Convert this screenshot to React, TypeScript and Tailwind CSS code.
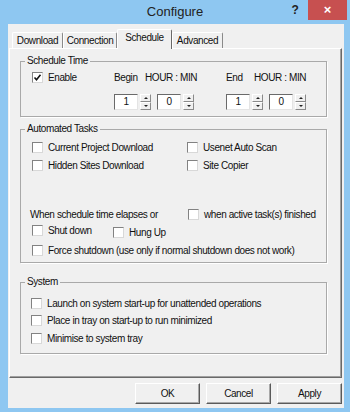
import React from "react";

const Box = ({ checked }: { checked?: boolean }) => (
  <span className="w-[11px] h-[11px] shrink-0 bg-white border border-t-[#828282] border-l-[#828282] border-r-[#d8d8d8] border-b-[#d8d8d8] flex items-center justify-center">
    {checked && (
      <svg width="9" height="9" viewBox="0 0 9 9">
        <path d="M1.5 4.5 L3.5 6.8 L7.5 1.8" stroke="#111" strokeWidth="1.6" fill="none" />
      </svg>
    )}
  </span>
);

const Check = ({ label, checked, className = "" }: { label: string; checked?: boolean; className?: string }) => (
  <label className={`flex items-center gap-[5px] h-[11px] whitespace-nowrap ${className}`}>
    <Box checked={checked} />
    <span>{label}</span>
  </label>
);

const Arrow = ({ up }: { up?: boolean }) => (
  <span
    className={
      up
        ? "w-0 h-0 border-x-[2px] border-x-transparent border-b-[2px] border-b-[#222]"
        : "w-0 h-0 border-x-[2px] border-x-transparent border-t-[2px] border-t-[#222]"
    }
  />
);

const Spin = ({ value }: { value: string }) => (
  <div className="flex items-center gap-[2px]">
    <div className="w-[24px] h-[16px] bg-white border border-t-[#6a6a6a] border-l-[#6a6a6a] border-r-[#e4e4e4] border-b-[#e4e4e4] flex items-center justify-center">
      {value}
    </div>
    <div className="flex flex-col w-[11px] h-[16px]">
      <div className="h-[8px] bg-[#f0f0f0] border border-t-white border-l-white border-r-[#8a8a8a] border-b-[#8a8a8a] flex items-center justify-center">
        <Arrow up />
      </div>
      <div className="h-[8px] bg-[#f0f0f0] border border-t-white border-l-white border-r-[#8a8a8a] border-b-[#8a8a8a] flex items-center justify-center">
        <Arrow />
      </div>
    </div>
  </div>
);

const TimePair = () => (
  <div className="flex items-center gap-[6px]">
    <Spin value="1" />
    <Spin value="0" />
  </div>
);

const Group = ({ title, className = "", children }: { title: string; className?: string; children: React.ReactNode }) => (
  <fieldset className={`ml-[10px] w-[307px] border border-[#a9a9a9] shadow-[1px_1px_0_#fff] ${className}`}>
    <legend className="ml-[4px] px-[2px] leading-[12px]">{title}</legend>
    {children}
  </fieldset>
);

const Tab = ({ label, active, w }: { label: string; active?: boolean; w: string }) =>
  active ? (
    <div className={`${w} h-[20px] mb-[-1px] relative z-10 bg-[#f0f0f0] rounded-t-[2px] border-t border-l border-r border-t-white border-l-white border-r-[#696969] flex justify-center pt-[2px]`}>
      {label}
    </div>
  ) : (
    <div className={`${w} h-[16px] rounded-t-[2px] border-t border-l border-r border-t-white border-l-white border-r-[#8a8a8a] flex items-center justify-center`}>
      {label}
    </div>
  );

const Btn = ({ label }: { label: string }) => (
  <button className="w-[65px] h-[21px] bg-[#f0f0f0] border border-t-white border-l-white border-r-[#5a5a5a] border-b-[#5a5a5a] shadow-[inset_-1px_-1px_0_#a8a8a8] flex items-center justify-center">
    {label}
  </button>
);

export default function App() {
  return (
    <div className="w-[350px] h-[412px] bg-[#8ec7f1] font-['Liberation_Sans',Arial,sans-serif] text-[10px] leading-[12px] tracking-[-0.4px] text-[#111] overflow-hidden">
      <div className="h-[24px] grid grid-cols-[1fr_auto_1fr]">
        <div />
        <div className="flex items-center text-[13px] tracking-normal text-[#222]">Configure</div>
        <div className="flex items-start justify-end pr-[3px]">
          <span className="w-[14px] h-[20px] mr-[6px] flex items-center justify-center font-bold text-[12px] text-[#222]">?</span>
          <span className="w-[39px] h-[20px] bg-[#c75050] flex items-center justify-center text-white font-bold text-[13px] tracking-normal">
            ×
          </span>
        </div>
      </div>

      <div className="ml-[8px] w-[336px] h-[384px] bg-[#f0f0f0] flex flex-col">
        <div className="h-[24px] flex items-end pl-[4px]">
          <Tab label="Download" w="w-[51px]" />
          <Tab label="Connection" w="w-[54px]" />
          <Tab label="Schedule" w="w-[55px]" active />
          <Tab label="Advanced" w="w-[51px]" />
        </div>

        <div className="ml-[1px] w-[333px] h-[330px] border border-t-white border-l-white border-r-[#696969] border-b-[#696969] shadow-[inset_-1px_-1px_0_#a0a0a0]">
          <Group title="Schedule Time" className="mt-[6px] pb-[6px]">
            <div className="flex items-center mt-[5px] h-[11px]">
              <div className="w-[93px] pl-[11px]">
                <Check label="Enable" checked />
              </div>
              <div className="w-[112px] flex whitespace-nowrap">
                <span className="w-[31px]">Begin</span>
                <span>HOUR : MIN</span>
              </div>
              <div className="flex whitespace-nowrap">
                <span className="w-[28px]">End</span>
                <span>HOUR : MIN</span>
              </div>
            </div>
            <div className="flex mt-[11px] pl-[93px]">
              <div className="w-[112px]">
                <TimePair />
              </div>
              <TimePair />
            </div>
          </Group>

          <Group title="Automated Tasks" className="mt-[6px] pb-[6px]">
            <div className="grid grid-cols-[155px_1fr] gap-y-[7px] mt-[7px] pl-[11px]">
              <Check label="Current Project Download" />
              <Check label="Usenet Auto Scan" />
              <Check label="Hidden Sites Download" />
              <Check label="Site Copier" />
            </div>
            <div className="flex items-center mt-[38px] h-[11px]">
              <span className="w-[167px] pl-[9px] whitespace-nowrap">When schedule time elapses or</span>
              <Check label="when active task(s) finished" />
            </div>
            <div className="flex items-start mt-[5px] pl-[11px]">
              <Check label="Shut down" className="w-[81px]" />
              <Check label="Hung Up" className="mt-[2px]" />
            </div>
            <div className="mt-[7px] pl-[11px]">
              <Check label="Force shutdown (use only if normal shutdown does not work)" />
            </div>
          </Group>

          <Group title="System" className="mt-[13px] pb-[9px]">
            <div className="flex flex-col pl-[10px] mt-[10px]">
              <Check label="Launch on system start-up for unattended operations" />
              <Check label="Place in tray on start-up to run minimized" className="mt-[6px]" />
              <Check label="Minimise to system tray" className="mt-[7px]" />
            </div>
          </Group>
        </div>

        <div className="flex justify-end gap-[6px] mt-[5px] pr-[2px]">
          <Btn label="OK" />
          <Btn label="Cancel" />
          <Btn label="Apply" />
        </div>
      </div>
    </div>
  );
}
